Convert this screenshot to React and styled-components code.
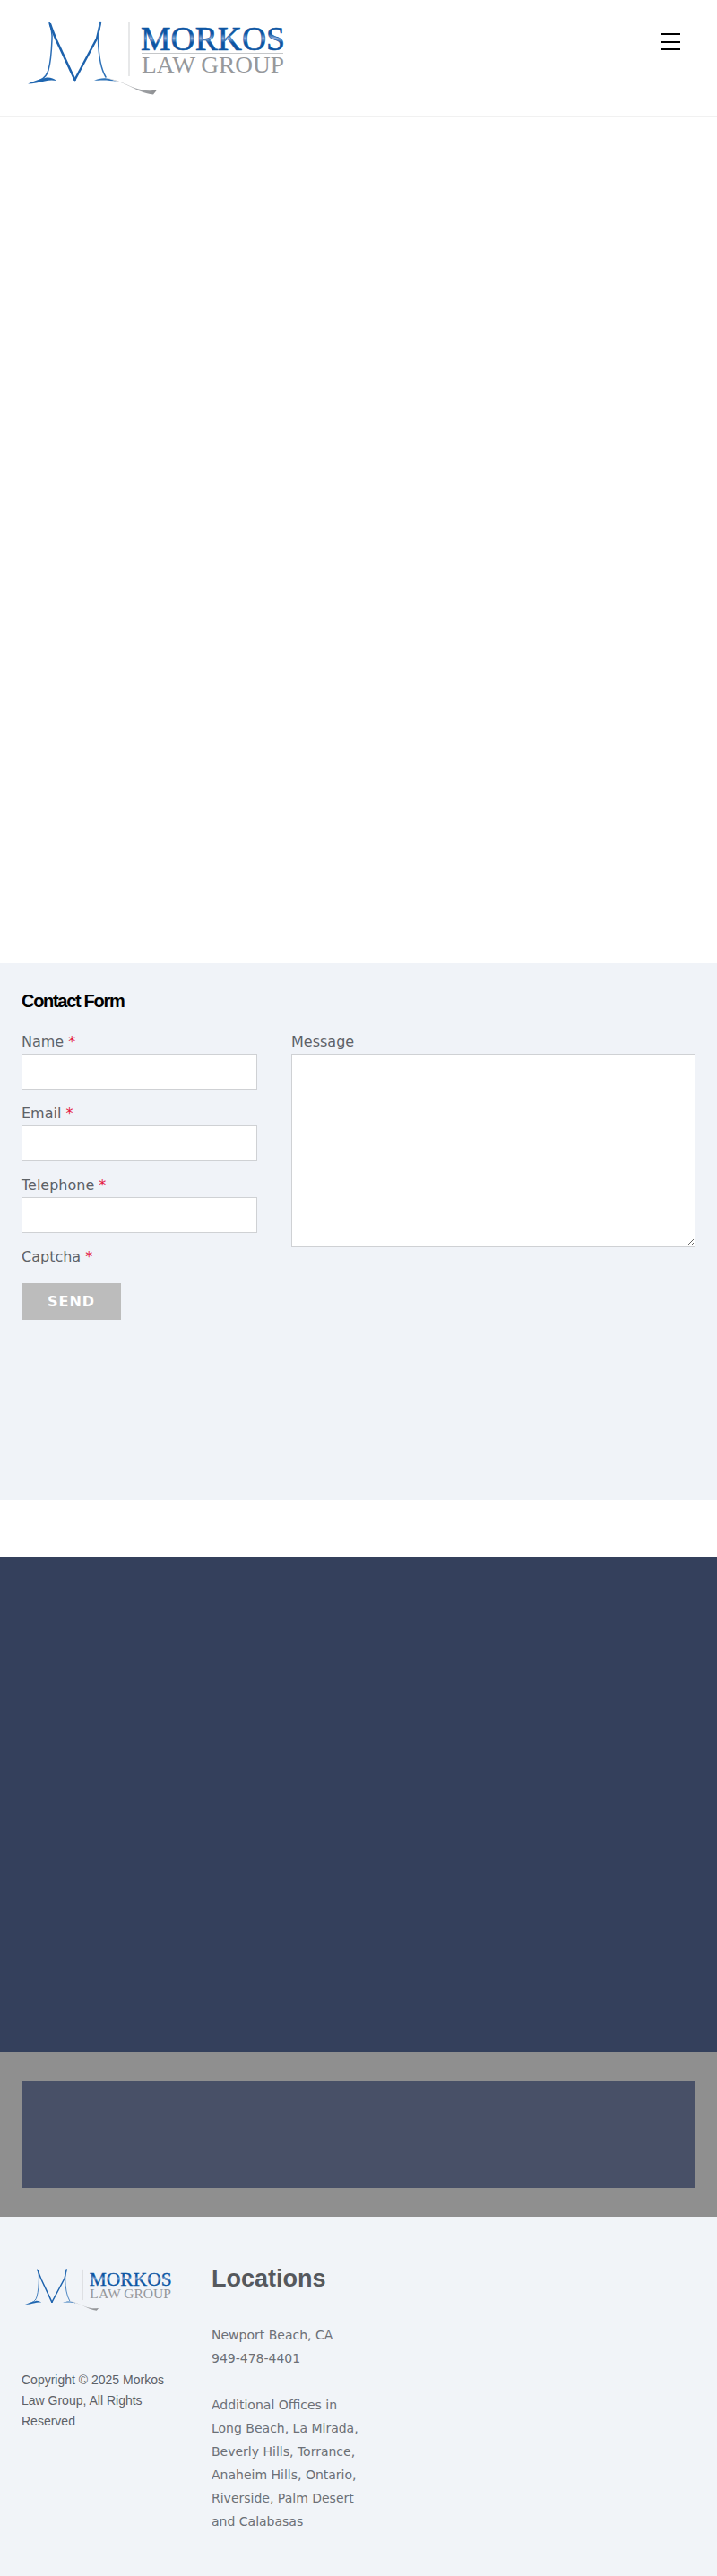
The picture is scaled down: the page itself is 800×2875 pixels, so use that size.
import styled, { createGlobalStyle } from "styled-components"

const GlobalStyle = createGlobalStyle`
  html, body {
    margin: 0;
    padding: 0;
    background: #ffffff;
  }
  * {
    box-sizing: border-box;
  }
`;

const Page = styled.div`
  width: 800px;
  height: 2875px;
  overflow: hidden;
  display: flex;
  flex-direction: column;
  font-family: "DejaVu Sans", sans-serif;
`;

const Header = styled.header`
  height: 131px;
  flex: none;
  display: flex;
  align-items: flex-start;
  justify-content: space-between;
  padding: 20px 41px 0 24px;
  border-bottom: 1px solid #f1f1f1;
`;

const MenuButton = styled.button`
  width: 22px;
  display: flex;
  flex-direction: column;
  gap: 6.5px;
  margin-top: 17px;
  padding: 0;
  border: 0;
  background: none;
`;

const MenuBar = styled.span`
  display: block;
  height: 2px;
  background: #000;
`;

const HeroSpace = styled.div`
  height: 944px;
  flex: none;
`;

const ContactSection = styled.section`
  height: 599px;
  flex: none;
  padding: 30px 24px 0;
  background: #f0f3f8;
`;

const ContactTitle = styled.h2`
  margin: 0 0 21px;
  font-family: "Liberation Sans", Arial, sans-serif;
  font-size: 20px;
  line-height: 24px;
  font-weight: 700;
  letter-spacing: -1.3px;
  color: #000;
`;

const FormGrid = styled.form`
  display: grid;
  grid-template-columns: 263px 451px;
  column-gap: 38px;
`;

const FieldColumn = styled.div`
  display: flex;
  flex-direction: column;
`;

const Label = styled.label`
  display: block;
  height: 24px;
  margin-bottom: 2px;
  font-size: 16px;
  line-height: 25px;
  color: #5d6167;
`;

const Required = styled.span`
  color: #e4173f;
`;

const TextInput = styled.input`
  display: block;
  width: 100%;
  height: 40px;
  margin-bottom: 14px;
  background: #fff;
  border: 1px solid #cfd1d4;
  border-radius: 0;
`;

const MessageInput = styled.textarea`
  display: block;
  width: 100%;
  height: 216px;
  background: #fff;
  border: 1px solid #cfd1d4;
  border-radius: 0;
`;

const SendButton = styled.button`
  display: block;
  width: 111px;
  height: 41px;
  margin-top: 16px;
  padding: 0;
  border: 0;
  background: #bcbcbc;
  color: #fff;
  font-family: "DejaVu Sans", sans-serif;
  font-size: 16px;
  font-weight: 700;
  letter-spacing: 1px;
`;

const Gap = styled.div`
  height: 64px;
  flex: none;
`;

const DarkBand = styled.div`
  height: 552px;
  flex: none;
  background: #34405c;
`;

const GreyBand = styled.div`
  height: 184px;
  flex: none;
  padding: 32px 24px;
  background: #8f8f8f;
`;

const GreyPanel = styled.div`
  height: 120px;
  background: #485067;
`;

const Footer = styled.footer`
  flex: 1;
  display: grid;
  grid-template-columns: 212px 1fr;
  padding: 56px 24px 0;
  background: #f1f4f8;
`;

const FooterBrand = styled.div`
  display: flex;
  flex-direction: column;
`;

const Copyright = styled.p`
  width: 170px;
  margin: 58px 0 0;
  font-family: "Liberation Sans", Arial, sans-serif;
  font-size: 14px;
  line-height: 23px;
  color: #5d6167;
`;

const LocationsTitle = styled.h2`
  margin: 0 0 37px;
  font-family: "Liberation Sans", Arial, sans-serif;
  font-size: 27px;
  line-height: 26px;
  font-weight: 700;
  color: #55585d;
`;

const LocationText = styled.p`
  width: 170px;
  margin: 0 0 26px;
  font-size: 14px;
  line-height: 26px;
  color: #6c7076;
`;

const LogoSvg = styled.svg`
  display: block;
  width: ${(props) => props.$width}px;
  height: auto;
`;

const LogoName = styled.text`
  font-family: "Liberation Serif", "Times New Roman", serif;
  font-size: 37px;
  stroke-width: 0.6px;
`;

const LogoGroup = styled.text`
  font-family: "Liberation Serif", "Times New Roman", serif;
  font-size: 26px;
  fill: #96989b;
`;

const LogoStroke = styled.path`
  fill: none;
  stroke: ${(props) => props.$color};
  stroke-width: ${(props) => props.$weight}px;
  stroke-linecap: round;
  stroke-linejoin: round;
`;

const Logo = ({ width, id }) => {
  return (
    <LogoSvg $width={width} viewBox="24 20 300 100" role="img" aria-label="Morkos Law Group">
      <defs>
        <linearGradient id={`${id}-blue`} x1="0" y1="0" x2="0" y2="1">
          <stop offset="0" stopColor="#0d55a3" />
          <stop offset="0.36" stopColor="#0d55a3" />
          <stop offset="0.48" stopColor="#8fb0dc" />
          <stop offset="0.6" stopColor="#0d55a3" />
          <stop offset="1" stopColor="#0d55a3" />
        </linearGradient>
        <linearGradient id={`${id}-tail`} x1="0" y1="0" x2="1" y2="0">
          <stop offset="0" stopColor="#c9ccd0" />
          <stop offset="1" stopColor="#8d8f92" />
        </linearGradient>
      </defs>
      {/* the M: thin outer legs, heavier inner V, two flared feet */}
      <LogoStroke $color="#2a6db5" $weight={1.5} d="M55 25C57 31 58.5 37 58 44C57.5 56 57 68 54 78C52.5 84 50 87 45 89" />
      <LogoStroke $color="#1d62ad" $weight={2.6} d="M56 27C58 33 60 38 63 45L83.5 89" />
      <LogoStroke $color="#1d62ad" $weight={2.4} d="M83.5 89L108 43C109.5 37 111 31 112 25" />
      <LogoStroke $color="#2f72b8" $weight={1.5} d="M112 25C110.5 32 109.5 38 109.5 45C110 60 112 76 118 86" />
      <path d="M31 93.5C38 90 46 88 52 86.5C56 86 60 87.5 63 90C58 89 54 89.5 50 90.5C44 92 37 93.3 31 93.5Z" fill="#1f66b0" />
      <path d="M105 90C109 88 114 87 119 87.5C123 88 127 89.5 131 91C125 90 120 89.5 115 89.5C111 89.5 108 89.8 105 90Z" fill="#2f73b8" />
      <path d="M118 87C128 88 138 93 150 98C158 101 166 102 175 100.5L171 105.5C162 105 152 100 144 96C134 91 126 89 118 87Z" fill={`url(#${id}-tail)`} />
      <rect x="143.5" y="25" width="1" height="60" fill="#cfd1d3" />
      <LogoName x="157" y="56" textLength="161" lengthAdjust="spacingAndGlyphs" fill={`url(#${id}-blue)`} stroke="#0d55a3">MORKOS</LogoName>
      <rect x="158" y="59" width="158" height="1" fill="#c5c7c9" />
      <LogoGroup x="158" y="81" textLength="159" lengthAdjust="spacingAndGlyphs">LAW GROUP</LogoGroup>
    </LogoSvg>
  )
}

const App = () => {
  return (
    <Page>
      <GlobalStyle />
      <Header>
        <Logo width={300} id="header" />
        <MenuButton type="button" aria-label="Menu">
          <MenuBar />
          <MenuBar />
          <MenuBar />
        </MenuButton>
      </Header>
      <HeroSpace />
      <ContactSection>
        <ContactTitle>Contact Form</ContactTitle>
        <FormGrid>
          <FieldColumn>
            <Label>Name <Required>*</Required></Label>
            <TextInput type="text" />
            <Label>Email <Required>*</Required></Label>
            <TextInput type="email" />
            <Label>Telephone <Required>*</Required></Label>
            <TextInput type="tel" />
            <Label>Captcha <Required>*</Required></Label>
            <SendButton type="button">SEND</SendButton>
          </FieldColumn>
          <FieldColumn>
            <Label>Message</Label>
            <MessageInput />
          </FieldColumn>
        </FormGrid>
      </ContactSection>
      <Gap />
      <DarkBand />
      <GreyBand>
        <GreyPanel />
      </GreyBand>
      <Footer>
        <FooterBrand>
          <Logo width={171} id="footer" />
          <Copyright>Copyright © 2025 Morkos Law Group, All Rights Reserved</Copyright>
        </FooterBrand>
        <div>
          <LocationsTitle>Locations</LocationsTitle>
          <LocationText>Newport Beach, CA<br />949-478-4401</LocationText>
          <LocationText>Additional Offices in Long Beach, La Mirada, Beverly Hills, Torrance, Anaheim Hills, Ontario, Riverside, Palm Desert and Calabasas</LocationText>
        </div>
      </Footer>
    </Page>
  )
}

export default App
